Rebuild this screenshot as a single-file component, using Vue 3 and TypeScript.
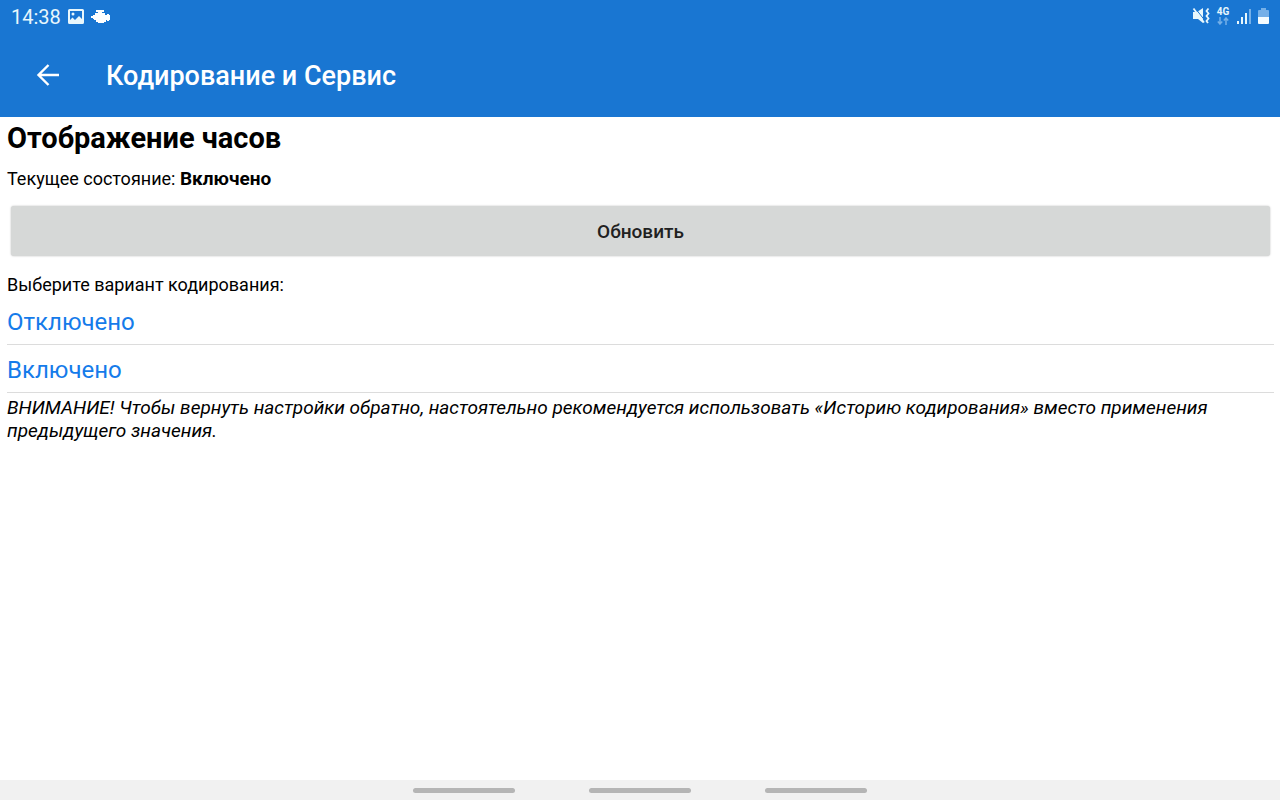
<script setup lang="ts">
import { ref } from 'vue'

const options: string[] = ['Отключено', 'Включено']
const current = ref('Включено')
const navKeys: string[] = ['Недавние', 'Домой', 'Назад']
</script>

<template>
  <div class="screen">
    <div class="status">
      <span class="time">14:38</span>
      <svg class="picture" width="16" height="16" viewBox="0 0 16 16">
        <path fill="#e8f7fc" fill-rule="evenodd" d="M1.500 1h13A1.500 1.500 0 0 1 16 2.500v12a1.500 1.500 0 0 1-1.500 1.500h-13A1.500 1.500 0 0 1 0 14.500v-12A1.500 1.500 0 0 1 1.500 1zM2 3v9l2.500-2.500L7 12l4-4 3 3V3z" />
        <circle cx="5" cy="6" r="1.500" fill="#e8f7fc" />
      </svg>
      <svg class="engine" width="19" height="14" viewBox="0 0 19 14">
        <path fill="#fff" d="M5 1h8v2h-2v1h3v2h2V5h2v1h1v5h-1v1h-2v-1h-1v2h-2v1H7v-1H5v-2H3v-1H2V9H0V7h2V6h2V4h3V3H5z" />
      </svg>
      <span class="spacer"></span>
      <svg width="18" height="18" viewBox="0 0 18 18">
        <path fill="#e8f7fc" d="M1 5h4l6-4v15l-5-4H1z" />
        <path fill="none" stroke="#1976d2" stroke-width="1" d="M3 1l9.500 12" />
        <path fill="none" stroke="#e8f7fc" stroke-width="1.800" d="M1.500 1.500l10.500 14" />
        <path fill="none" stroke="#e8f7fc" stroke-width="1.800" d="M16.500 1.500L14.500 4l2 2.500-2 2.500 2 2.500-2 2.500 1.500 2" />
      </svg>
      <span class="network">
        <span>4G</span>
        <svg width="12" height="8" viewBox="0 0 12 8">
          <path fill="none" stroke="#75b0e8" stroke-width="1.500" d="M3 0v7M.8 4.500L3 7l2.200-2.500M9 8V1M6.800 3.500L9 1l2.200 2.500" />
        </svg>
      </span>
      <svg class="signal" width="14" height="16" viewBox="0 0 14 16">
        <path fill="#e8f7fc" d="M0 13h2v3H0zM4 9h2v7H4zM8 5h2v11H8z" />
        <path fill="#75b0e8" d="M12 1h2v15h-2z" />
      </svg>
      <svg class="battery" width="11" height="17" viewBox="0 0 11 17">
        <path fill="#75b0e8" d="M3 0h5v2h2a1 1 0 0 1 1 1v6H0V3a1 1 0 0 1 1-1h2z" />
        <path fill="#f4fcff" d="M0 9h11v6a1 1 0 0 1-1 1H1a1 1 0 0 1-1-1z" />
      </svg>
    </div>

    <header class="toolbar">
      <button class="back" type="button" aria-label="Назад">
        <svg width="24" height="24" viewBox="0 0 24 24">
          <path fill="none" stroke="#fff" stroke-width="2.400" d="M23 12H2.500M12.500 2L2.500 12l10 10" />
        </svg>
      </button>
      <span class="title">Кодирование и Сервис</span>
    </header>

    <main class="content">
      <h1>Отображение часов</h1>
      <p class="line state">Текущее состояние: <b>{{ current }}</b></p>
      <button class="refresh" type="button">Обновить</button>
      <p class="line prompt">Выберите вариант кодирования:</p>
      <ul class="options">
        <li v-for="option in options" :key="option">
          <button type="button" @click="current = option">{{ option }}</button>
        </li>
      </ul>
      <p class="warning">ВНИМАНИЕ! Чтобы вернуть настройки обратно, настоятельно рекомендуется использовать «Историю кодирования» вместо применения предыдущего значения.</p>
    </main>

    <nav class="navbar">
      <button v-for="key in navKeys" :key="key" type="button" :aria-label="key"></button>
    </nav>
  </div>
</template>

<style>
body {
  margin: 0;
  background: #fff;
}
</style>

<style scoped>
.screen {
  display: flex;
  flex-direction: column;
  min-height: 100vh;
  font-family: Roboto, "Liberation Sans", sans-serif;
  color: #000;
}
button {
  margin: 0;
  padding: 0;
  border: 0;
  background: none;
  font: inherit;
  color: inherit;
  cursor: pointer;
}
svg {
  display: block;
  flex: none;
}
.status {
  display: flex;
  align-items: center;
  height: 32px;
  padding: 0 11px;
  background: #1976d2;
  color: #e8f7fc;
}
.time {
  font-size: 20px;
  line-height: 32px;
  padding-top: 2px;
}
.picture {
  margin-left: 7px;
}
.engine {
  margin-left: 7px;
}
.spacer {
  flex: 1;
}
.network {
  display: flex;
  flex-direction: column;
  align-items: center;
  width: 14px;
  margin-left: 6px;
  font-size: 10px;
  font-weight: 700;
  line-height: 10px;
}
.signal {
  margin-left: 7px;
}
.battery {
  margin-left: 7px;
}
.toolbar {
  display: flex;
  align-items: center;
  height: 85px;
  padding-left: 36px;
  background: #1976d2;
  color: #fff;
}
.back {
  margin-right: 46px;
}
.title {
  padding-top: 2px;
  font-size: 27px;
  font-weight: 500;
  line-height: 32px;
}
.content {
  flex: 1;
  padding: 4px 6px 0 7px;
}
h1 {
  margin: 0;
  font-size: 29px;
  font-weight: 700;
  line-height: 34px;
}
.line {
  margin: 0;
  font-size: 18px;
  line-height: 24px;
}
.line b {
  font-size: 19px;
}
.state {
  padding-top: 12px;
}
.refresh {
  display: block;
  width: calc(100% - 8px);
  height: 50px;
  margin: 15px 4px 0;
  border-radius: 3px;
  background: #d6d8d7;
  box-shadow: 0 0 2px #bbb;
  color: #212121;
  font-size: 19px;
  font-weight: 500;
}
.prompt {
  padding-top: 17px;
}
.options {
  list-style: none;
  margin: 0;
  padding: 0;
}
.options li {
  border-bottom: 1px solid #dcdcdc;
}
.options button {
  display: block;
  width: 100%;
  height: 47px;
  padding-top: 2px;
  text-align: left;
  font-size: 24px;
  color: #157bea;
}
.warning {
  margin: 0;
  padding-top: 3px;
  font-size: 19px;
  font-style: italic;
  line-height: 23px;
}
.navbar {
  display: flex;
  justify-content: center;
  align-items: center;
  gap: 74px;
  height: 20px;
  background: #f1f1f1;
}
.navbar button {
  width: 102px;
  height: 5px;
  border-radius: 3px;
  background: #b5b5b5;
}
</style>
